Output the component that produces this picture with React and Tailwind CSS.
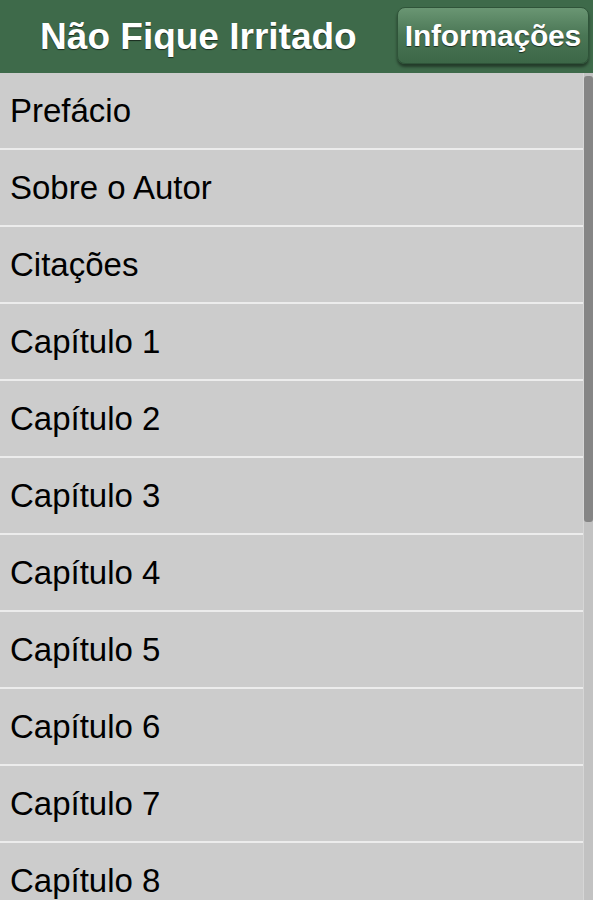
const items = [
  'Prefácio',
  'Sobre o Autor',
  'Citações',
  'Capítulo 1',
  'Capítulo 2',
  'Capítulo 3',
  'Capítulo 4',
  'Capítulo 5',
  'Capítulo 6',
  'Capítulo 7',
  'Capítulo 8',
  'Capítulo 9',
];

export default function App() {
  return (
    <div className="h-[900px] w-[593px] overflow-hidden bg-[#cccccc] flex flex-col font-['Liberation_Sans',Arial,sans-serif]">
      <div className="h-[73px] shrink-0 bg-[#3e6a4a] flex items-center">
        <div className="flex-1 text-center text-white font-bold text-[37px] [text-shadow:0_1px_1px_rgba(0,0,0,0.6)]">
          Não Fique Irritado
        </div>
        <button className="mr-[4px] mb-[3px] h-[57px] px-[7px] rounded-[8px] bg-gradient-to-b from-[#6a9673] via-[#4a7655] to-[#3c6747] border border-[#2f5439] shadow-[0_3px_3px_rgba(0,0,0,0.45)] text-white font-bold text-[30px] tracking-[-0.2px] [text-shadow:0_1px_1px_rgba(0,0,0,0.6)]">
          Informações
        </button>
      </div>
      <div className="flex-1 flex min-h-0">
        <div className="flex-1 flex flex-col">
          {items.map((t, i) => (
            <div
              key={i}
              className={
                'shrink-0 flex items-center pl-[10px] text-black text-[33px] bg-[#cccccc] ' +
                (i === 0 ? 'h-[75px]' : 'h-[77px] border-t-2 border-[#ececec]')
              }
            >
              {t}
            </div>
          ))}
        </div>
        <div className="w-[10px] shrink-0 bg-[#c2c2c2] border-l border-[#d6d6d6] pt-[3px]">
          <div className="h-[446px] w-full rounded-[3px] bg-[#858585]"></div>
        </div>
      </div>
    </div>
  );
}
